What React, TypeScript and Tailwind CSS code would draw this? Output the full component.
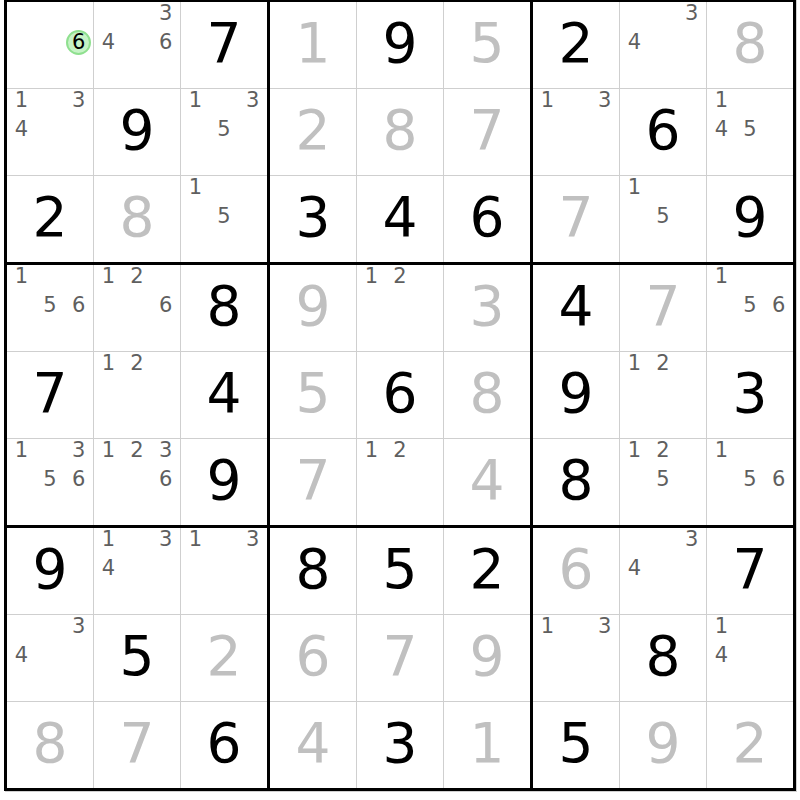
const board: string[][] = [
  ["h6", "p346", "7", "g1", "9", "g5", "2", "p34", "g8"],
  ["p134", "9", "p135", "g2", "g8", "g7", "p13", "6", "p145"],
  ["2", "g8", "p15", "3", "4", "6", "g7", "p15", "9"],
  ["p156", "p126", "8", "g9", "p12", "g3", "4", "g7", "p156"],
  ["7", "p12", "4", "g5", "6", "g8", "9", "p12", "3"],
  ["p1356", "p1236", "9", "g7", "p12", "g4", "8", "p125", "p156"],
  ["9", "p134", "p13", "8", "5", "2", "g6", "p34", "7"],
  ["p34", "5", "g2", "g6", "g7", "g9", "p13", "8", "p14"],
  ["g8", "g7", "6", "g4", "3", "g1", "5", "g9", "g2"],
]

// notas de lápis: grade 3x3 dentro da célula
function Pencil({ marks, highlight }: { marks: string; highlight?: string }) {
  return (
    <div className="grid grid-cols-3 grid-rows-3 w-full h-full">
      {["1", "2", "3", "4", "5", "6", "7", "8", "9"].map((d) => (
        <div key={d} className="flex items-center justify-center pb-[5px]">
          {highlight === d ? (
            <span className="flex items-center justify-center w-[25px] h-[25px] rounded-full bg-[#c6f3c6] border-2 border-[#8fe08f] text-[21px] leading-none text-black">
              {d}
            </span>
          ) : marks.includes(d) ? (
            <span className="text-[21px] leading-none text-[#5f5f5f]">{d}</span>
          ) : null}
        </div>
      ))}
    </div>
  )
}

function Cell({ value }: { value: string }) {
  let content: React.ReactNode = null
  if (value.startsWith("p")) {
    content = <Pencil marks={value.slice(1)} />
  } else if (value.startsWith("h")) {
    content = <Pencil marks="" highlight={value.slice(1)} />
  } else if (value.startsWith("g")) {
    content = <span className="text-[55px] leading-none text-[#c0c0c0] pb-[4px]">{value.slice(1)}</span>
  } else {
    content = <span className="text-[55px] leading-none text-black pb-[4px]">{value}</span>
  }
  return <div className="bg-white flex items-center justify-center">{content}</div>
}

export default function App() {
  return (
    <div className="w-[800px] h-[800px] bg-white" style={{ fontFamily: '"DejaVu Sans", Verdana, sans-serif' }}>
      <div className="ml-1 -mt-px w-[792px] h-[792px] border-[3px] border-black bg-black grid grid-cols-3 grid-rows-3 gap-[3px] shadow-[1px_1px_0_#d0d0d0]">
        {[0, 1, 2].map((br) =>
          [0, 1, 2].map((bc) => (
            <div key={`${br}-${bc}`} className="grid grid-cols-3 grid-rows-3 gap-px bg-[#cfcfcf]">
              {[0, 1, 2].map((r) =>
                [0, 1, 2].map((c) => <Cell key={`${r}-${c}`} value={board[br * 3 + r][bc * 3 + c]} />)
              )}
            </div>
          ))
        )}
      </div>
    </div>
  )
}
